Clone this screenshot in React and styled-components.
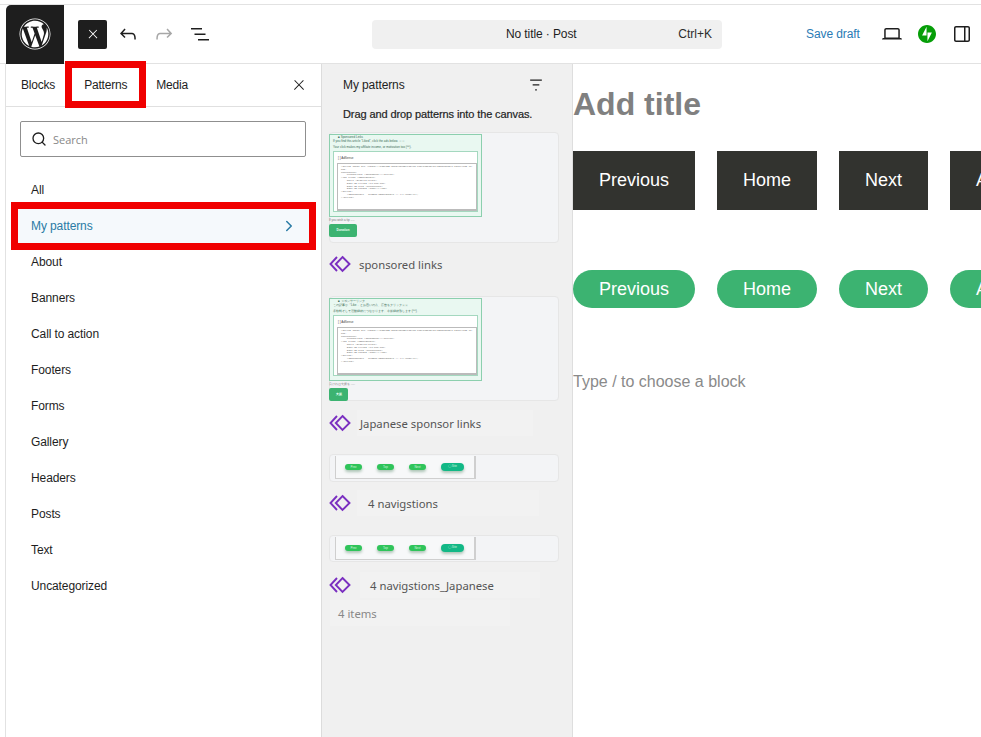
import React from 'react';
import styled, { createGlobalStyle } from 'styled-components';
import { FaWordpress } from 'react-icons/fa';
import { Search, ChevronRight } from 'lucide-react';

const categories = ['All', 'My patterns', 'About', 'Banners', 'Call to action', 'Footers', 'Forms', 'Gallery', 'Headers', 'Posts', 'Text', 'Uncategorized'];
const navLabels = ['Previous', 'Home', 'Next', 'About'];

function WpIcon({ d, size = 24, color = '#1e1e1e' }) {
    return (
        <svg width={size} height={size} viewBox="0 0 24 24" fill={color}>
            <path d={d} />
        </svg>
    );
}

const icons = {
    close: 'M13 11.8l6.1-6.3-1-1-6.1 6.2-6.1-6.2-1 1 6.1 6.3-6.5 6.7 1 1 6.5-6.6 6.5 6.6 1-1z',
    undo: 'M18.3 11.7c-.6-.6-1.4-.9-2.3-.9H6.7l2.9-3.3-1.1-1-4.5 5L8.5 16l1-1-2.7-2.7H16c.5 0 .9.2 1.3.5 1 1 1 3.4 1 4.5v.3h1.5v-.2c0-1.5 0-4.3-1.5-5.7z',
    redo: 'M15.6 6.5l-1.1 1 2.9 3.3H8c-.9 0-1.7.3-2.3.9-1.4 1.5-1.4 4.2-1.4 5.6v.2h1.5v-.3c0-1.1 0-3.5 1-4.5.3-.3.7-.5 1.3-.5h9.2L14.5 15l1.1 1.1 4.6-4.6-4.6-5z',
    list: 'M3 6h11v1.5H3V6zm3.5 5.5h11V13h-11v-1.5zM21 17H10v1.5h11V17z',
    laptop: 'M20.5 16h-.7V8c0-1.1-.9-2-2-2H6.2c-1.1 0-2 .9-2 2v8h-.7c-.8 0-1.5.7-1.5 1.5h20c0-.8-.7-1.5-1.5-1.5zM5.7 8c0-.3.2-.5.5-.5h11.6c.3 0 .5.2.5.5v7.6H5.7V8z',
    drawer: 'M18 4H6c-1.1 0-2 .9-2 2v12c0 1.1.9 2 2 2h12c1.1 0 2-.9 2-2V6c0-1.1-.9-2-2-2zm-4 14.5H6c-.3 0-.5-.2-.5-.5V6c0-.3.2-.5.5-.5h8v13zm4.5-.5c0 .3-.2.5-.5.5h-2.5v-13H18c.3 0 .5.2.5.5v12z',
    filter: 'M5 5.5h14V7H5zM8 11h8v1.5H8zM11 17h2v1.5h-2z',
};

function SyncedIcon() {
    return (
        <svg width="22" height="18" viewBox="0 0 22 18" fill="none" stroke="#7a2fc0" strokeWidth="1.9">
            <path d="M8 2 1.5 9 8 16" />
            <path d="M13.5 2 20.5 9 13.5 16 6.8 9z" />
        </svg>
    );
}

function JetpackIcon() {
    return (
        <svg width="18" height="18" viewBox="0 0 32 32">
            <path fill="#069e08" fillRule="evenodd" d="M16 0C7.2 0 0 7.2 0 16s7.2 16 16 16 16-7.2 16-16S24.8 0 16 0zM15.2 18.7H7.3L15.2 3.3v15.4zM16.8 28.7V13.3h7.9L16.8 28.7z" />
        </svg>
    );
}

function CodeShot({ title, lineOne, lineTwo, foot, action, buttonWidth }) {
    return (
        <>
            <ShotFrame>
                <ShotTitle>{title}</ShotTitle>
                <ShotLine>{lineOne}</ShotLine>
                <ShotLine>{lineTwo}</ShotLine>
                <ShotInner>
                    <ShotHeading>[ ] AdSense</ShotHeading>
                    <ShotCode>
                        {`<script async src="https://pagead2.googlesyndication.com/pagead/js/adsbygoogle.js?client=ca-pub-
0000000000"
    crossorigin="anonymous"></script>
<ins class="adsbygoogle"
    style="display:block"
    data-ad-client="ca-pub-000"
    data-ad-slot="0000000000"
    data-ad-format="auto"></ins>
<script>
    (adsbygoogle = window.adsbygoogle || []).push({});
</script>`}
                    </ShotCode>
                </ShotInner>
            </ShotFrame>
            <ShotFoot>{foot}</ShotFoot>
            <ShotButton $width={buttonWidth}>{action}</ShotButton>
        </>
    );
}

function NavShot() {
    return (
        <NavFrame>
            <MiniPill>Prev</MiniPill>
            <MiniPill>Top</MiniPill>
            <MiniPill>Next</MiniPill>
            <MiniPill $teal>◯ Site</MiniPill>
        </NavFrame>
    );
}

export default function App() {
    return (
        <Page>
            <GlobalStyle />
            <TopBar>
                <LogoBox><FaWordpress size={32} color="#fff" /></LogoBox>
                <ToolGroup>
                    <BlackButton><WpIcon d={icons.close} size={14} color="#fff" /></BlackButton>
                    <ToolButton><WpIcon d={icons.undo} /></ToolButton>
                    <ToolButton><WpIcon d={icons.redo} color="#a7a7a7" /></ToolButton>
                    <ToolButton><WpIcon d={icons.list} /></ToolButton>
                </ToolGroup>
                <CommandBar>
                    <CommandTitle>No title · Post</CommandTitle>
                    <CommandKey>Ctrl+K</CommandKey>
                </CommandBar>
                <RightTools>
                    <SaveDraft>Save draft</SaveDraft>
                    <ToolButton><WpIcon d={icons.laptop} /></ToolButton>
                    <ToolButton><JetpackIcon /></ToolButton>
                    <ToolButton><WpIcon d={icons.drawer} /></ToolButton>
                </RightTools>
            </TopBar>
            <Body>
                <Inserter>
                    <Tabs>
                        <Tab>Blocks</Tab>
                        <Tab $marked>Patterns</Tab>
                        <Tab>Media</Tab>
                        <TabClose><WpIcon d={icons.close} size={16} /></TabClose>
                    </Tabs>
                    <SearchBox>
                        <Search size={16} color="#1e1e1e" strokeWidth={2} />
                        <SearchText>Search</SearchText>
                    </SearchBox>
                    <CategoryList>
                        {categories.map((name) => (
                            <Category key={name} $active={name === 'My patterns'}>
                                {name}
                                {name === 'My patterns' && <ChevronRight size={18} color="#2a7ba5" />}
                            </Category>
                        ))}
                    </CategoryList>
                </Inserter>
                <PatternPanel>
                    <PanelHead>
                        <PanelTitle>My patterns</PanelTitle>
                        <WpIcon d={icons.filter} size={20} />
                    </PanelHead>
                    <PanelHint>Drag and drop patterns into the canvas.</PanelHint>
                    <PatternCard $height={111}>
                        <CodeShot
                            title="■ Sponsored Links"
                            lineOne={'If you find this article "Liked", click the ads below. ☆☆'}
                            lineTwo="Your click makes my affiliate income, or motivation too (^^)."
                            foot="If you wish a tip ....."
                            action="Donation"
                            buttonWidth={28}
                        />
                    </PatternCard>
                    <PatternLabel $top={8} $bottom={19}>
                        <SyncedIcon />
                        <LabelName $left={7} $pad={1} $right={26} $plain>sponsored links</LabelName>
                    </PatternLabel>
                    <PatternCard $height={105}>
                        <CodeShot
                            title="■ スポンサーリンク"
                            lineOne="この記事が「Like」とお思いの方、広告をクリック ☆☆"
                            lineTwo="手数料そして活動継続につながります。今後継続致します (^^)。"
                            foot="良ければ支援を ....."
                            action="支援"
                            buttonWidth={19}
                        />
                    </PatternCard>
                    <PatternLabel $top={9} $bottom={18}>
                        <SyncedIcon />
                        <LabelName $left={6} $pad={3} $right={26}>Japanese sponsor links</LabelName>
                    </PatternLabel>
                    <PatternCard $height={28}><NavShot /></PatternCard>
                    <PatternLabel $top={8} $bottom={19}>
                        <SyncedIcon />
                        <LabelName $left={6} $pad={11} $right={20}>4 navigstions</LabelName>
                    </PatternLabel>
                    <PatternCard $height={27}><NavShot /></PatternCard>
                    <PatternLabel $top={10} $bottom={2}>
                        <SyncedIcon />
                        <LabelName $left={9} $pad={10} $right={19}>4 navigstions_Japanese</LabelName>
                    </PatternLabel>
                    <ItemCount>4 items</ItemCount>
                </PatternPanel>
                <Canvas>
                    <PostTitle>Add title</PostTitle>
                    <NavRow>
                        {navLabels.map((label) => <NavButton key={label}>{label}</NavButton>)}
                    </NavRow>
                    <NavRow $green>
                        {navLabels.map((label) => <NavButton key={label} $green>{label}</NavButton>)}
                    </NavRow>
                    <BlockHint>Type / to choose a block</BlockHint>
                </Canvas>
            </Body>
        </Page>
    );
}

const GlobalStyle = createGlobalStyle`
    html, body {
        margin: 0;
        background: #fff;
    }
    * {
        box-sizing: border-box;
    }
`;

const Page = styled.div`
    height: 737px;
    overflow: hidden;
    padding-top: 4px;
    display: flex;
    flex-direction: column;
    font-family: "Liberation Sans", Arial, sans-serif;
    font-size: 12px;
    color: #1e1e1e;
`;

const TopBar = styled.header`
    height: 60px;
    flex: none;
    display: flex;
    align-items: center;
    border-top: 1px solid #e2e2e2;
    border-bottom: 1px solid #e2e2e2;
`;

const LogoBox = styled.div`
    width: 58px;
    height: 59px;
    margin-left: 6px;
    flex: none;
    display: flex;
    align-items: center;
    justify-content: center;
    background: #1e1e1e;
    border-top-left-radius: 5px;
`;

const ToolGroup = styled.div`
    display: flex;
    align-items: center;
    gap: 4px;
    margin-left: 14px;
`;

const ToolButton = styled.div`
    width: 32px;
    height: 32px;
    display: flex;
    align-items: center;
    justify-content: center;
`;

const BlackButton = styled(ToolButton)`
    width: 29px;
    height: 29px;
    margin-right: 1px;
    background: #1e1e1e;
    border-radius: 2px;
`;

const CommandBar = styled.div`
    width: 350px;
    height: 29px;
    margin-left: 156px;
    padding: 0 10px 0 134px;
    display: flex;
    align-items: center;
    justify-content: space-between;
    background: #f0f0f0;
    border-radius: 4px;
`;

const CommandTitle = styled.span`
    letter-spacing: -0.1px;
`;

const CommandKey = styled.span`
    color: #2c2c2c;
`;

const RightTools = styled.div`
    margin-left: 84px;
    display: flex;
    align-items: center;
    gap: 3px;
`;

const SaveDraft = styled.span`
    width: 67px;
    letter-spacing: -0.1px;
    color: #2a7bb5;
`;

const Body = styled.div`
    flex: 1;
    min-height: 0;
    display: flex;
`;

const Inserter = styled.aside`
    width: 317px;
    margin-left: 5px;
    flex: none;
    display: flex;
    flex-direction: column;
    border-left: 1px solid #e2e2e2;
    border-right: 1px solid #dcdcdc;
`;

const Tabs = styled.div`
    height: 43px;
    flex: none;
    position: relative;
    display: flex;
    align-items: center;
    padding: 0 14px 0 15px;
    gap: 29px;
    border-bottom: 1px solid #e0e0e0;
`;

const Tab = styled.span`
    position: relative;
    letter-spacing: -0.2px;
    color: #1e1e1e;

    ${({ $marked }) => $marked && `
        &::after {
            content: '';
            position: absolute;
            left: -19px;
            right: -19px;
            top: -17px;
            bottom: -16px;
            border: 7px solid #f00000;
        }
    `}
`;

const TabClose = styled.span`
    margin-left: auto;
    display: flex;
`;

const SearchBox = styled.div`
    height: 36px;
    flex: none;
    margin: 14px 15px 0 14px;
    padding: 0 10px;
    display: flex;
    align-items: center;
    gap: 6px;
    border: 1px solid #8f8f8f;
    border-radius: 2px;
`;

const SearchText = styled.span`
    font-family: "Open Sans", sans-serif;
    font-size: 11px;
    color: #888;
`;

const CategoryList = styled.div`
    margin-top: 15px;
    padding: 0 12px 0 6px;
    display: flex;
    flex-direction: column;
`;

const Category = styled.div`
    position: relative;
    height: 36px;
    padding: 0 11px 0 19px;
    display: flex;
    align-items: center;
    justify-content: space-between;
    letter-spacing: -0.1px;
    color: ${({ $active }) => ($active ? '#2a7ba5' : '#1e1e1e')};
    background: ${({ $active }) => ($active ? '#f5f9fc' : 'transparent')};

    ${({ $active }) => $active && `
        &::after {
            content: '';
            position: absolute;
            left: -1px;
            right: -7px;
            top: -6px;
            bottom: -6px;
            border: 7px solid #f00000;
        }
    `}
`;

const PatternPanel = styled.section`
    width: 251px;
    flex: none;
    padding: 0 13px 0 7px;
    background: #f0f0f0;
    border-right: 1px solid #dedede;
    display: flex;
    flex-direction: column;
`;

const PanelHead = styled.div`
    height: 41px;
    flex: none;
    padding: 1px 13px 1px 14px;
    display: flex;
    align-items: center;
    justify-content: space-between;
`;

const PanelTitle = styled.span`
    letter-spacing: -0.1px;
`;

const PanelHint = styled.div`
    height: 18px;
    flex: none;
    margin-bottom: 9px;
    padding-left: 14px;
    font-size: 11px;
    letter-spacing: -0.1px;
    line-height: 18px;
    white-space: nowrap;
    -webkit-text-stroke: 0.2px #1e1e1e;
`;

const PatternCard = styled.div`
    position: relative;
    height: ${({ $height }) => $height}px;
    flex: none;
    padding-top: 1px;
    background: #f3f4f6;
    border: 1px solid #e6e6e6;
    border-radius: 4px;
`;

const ShotFrame = styled.div`
    width: 153px;
    height: 83px;
    margin-left: -1px;
    padding: 2px 3px;
    background: #e9f8f1;
    border: 1.5px solid #8ccfae;
    font-size: 3px;
    line-height: 6px;
    color: #3a6b55;
    overflow: hidden;
`;

const ShotTitle = styled.div`
    margin-left: 5px;
    margin-top: -3px;
    margin-bottom: -2px;
`;

const ShotLine = styled.div`
    white-space: nowrap;
`;

const ShotInner = styled.div`
    height: 61px;
    margin-top: 1px;
    padding: 3px 0 0 3px;
    background: #fff;
    border: 1px solid #a4d8bf;
`;

const ShotHeading = styled.div`
    margin: 0 0 2px 1px;
    color: #444;
`;

const ShotCode = styled.pre`
    height: 48px;
    margin: 0;
    padding: 2px 3px;
    font: 2.4px/2.8px "Liberation Mono", monospace;
    color: #555;
    border: 1px solid #bbb;
    border-bottom-width: 2px;
    overflow: hidden;
    white-space: pre-wrap;
`;

const ShotFoot = styled.div`
    margin: 1px 0 2px -1px;
    font-size: 3px;
    line-height: 4px;
    color: #777;
`;

const ShotButton = styled.div`
    width: ${({ $width }) => $width}px;
    height: 13px;
    margin-left: -1px;
    background: #3cb371;
    border-radius: 2px;
    font-size: 3px;
    font-weight: 700;
    line-height: 13px;
    text-align: center;
    color: #e9fff3;
`;

const NavFrame = styled.div`
    width: 141px;
    height: 23px;
    margin-left: 5px;
    padding-left: 9px;
    display: flex;
    align-items: center;
    gap: 15px;
    background: #f7f8f9;
    border-left: 1px solid #cfcfcf;
    border-right: 2px solid #cfcfcf;
    border-bottom: 1px solid #cfcfcf;
`;

const MiniPill = styled.span`
    width: ${({ $teal }) => ($teal ? '23px' : '17px')};
    height: ${({ $teal }) => ($teal ? '8px' : '6px')};
    border-radius: 4px;
    background: ${({ $teal }) => ($teal ? '#12b886' : '#2fc45a')};
    box-shadow: 0 2px 3px rgba(0, 80, 30, 0.3);
    font-size: 3px;
    line-height: 6px;
    text-align: center;
    color: #d6f5df;
    white-space: nowrap;
`;

const PatternLabel = styled.div`
    height: 26px;
    flex: none;
    margin-top: ${({ $top }) => $top}px;
    margin-bottom: ${({ $bottom }) => $bottom}px;
    display: flex;
    align-items: center;
`;

const LabelName = styled.span`
    flex: 1;
    height: 26px;
    margin-left: ${({ $left }) => $left}px;
    margin-right: ${({ $right }) => $right}px;
    padding-left: ${({ $pad }) => $pad}px;
    line-height: 28px;
    background: ${({ $plain }) => ($plain ? 'transparent' : '#f2f2f2')};
    font-family: "Noto Sans", sans-serif;
    font-size: 11.3px;
    color: #555;
    white-space: nowrap;
`;

const ItemCount = styled.div`
    width: 180px;
    height: 26px;
    flex: none;
    margin-left: 1px;
    padding-left: 8px;
    line-height: 28px;
    background: #f2f2f2;
    font-family: "Noto Sans", sans-serif;
    font-size: 11.3px;
    color: #888;
`;

const Canvas = styled.main`
    flex: 1;
    min-width: 0;
    overflow: hidden;
    display: flex;
    flex-direction: column;
`;

const PostTitle = styled.h1`
    margin: 21px 0 0;
    font-size: 32px;
    line-height: 38px;
    font-weight: 700;
    color: #808080;
`;

const NavRow = styled.div`
    margin-top: ${({ $green }) => ($green ? '60px' : '28px')};
    display: flex;
    gap: 22px;
`;

const NavButton = styled.span`
    flex: none;
    height: ${({ $green }) => ($green ? '38px' : '59px')};
    padding: 0 26px;
    display: flex;
    align-items: center;
    font-size: 18px;
    color: #fff;
    background: ${({ $green }) => ($green ? '#3cb371' : '#32332f')};
    border-radius: ${({ $green }) => ($green ? '19px' : '0')};
`;

const BlockHint = styled.p`
    margin: 63px 0 0;
    font-size: 16px;
    line-height: 22px;
    color: #8a8a8a;
`;
